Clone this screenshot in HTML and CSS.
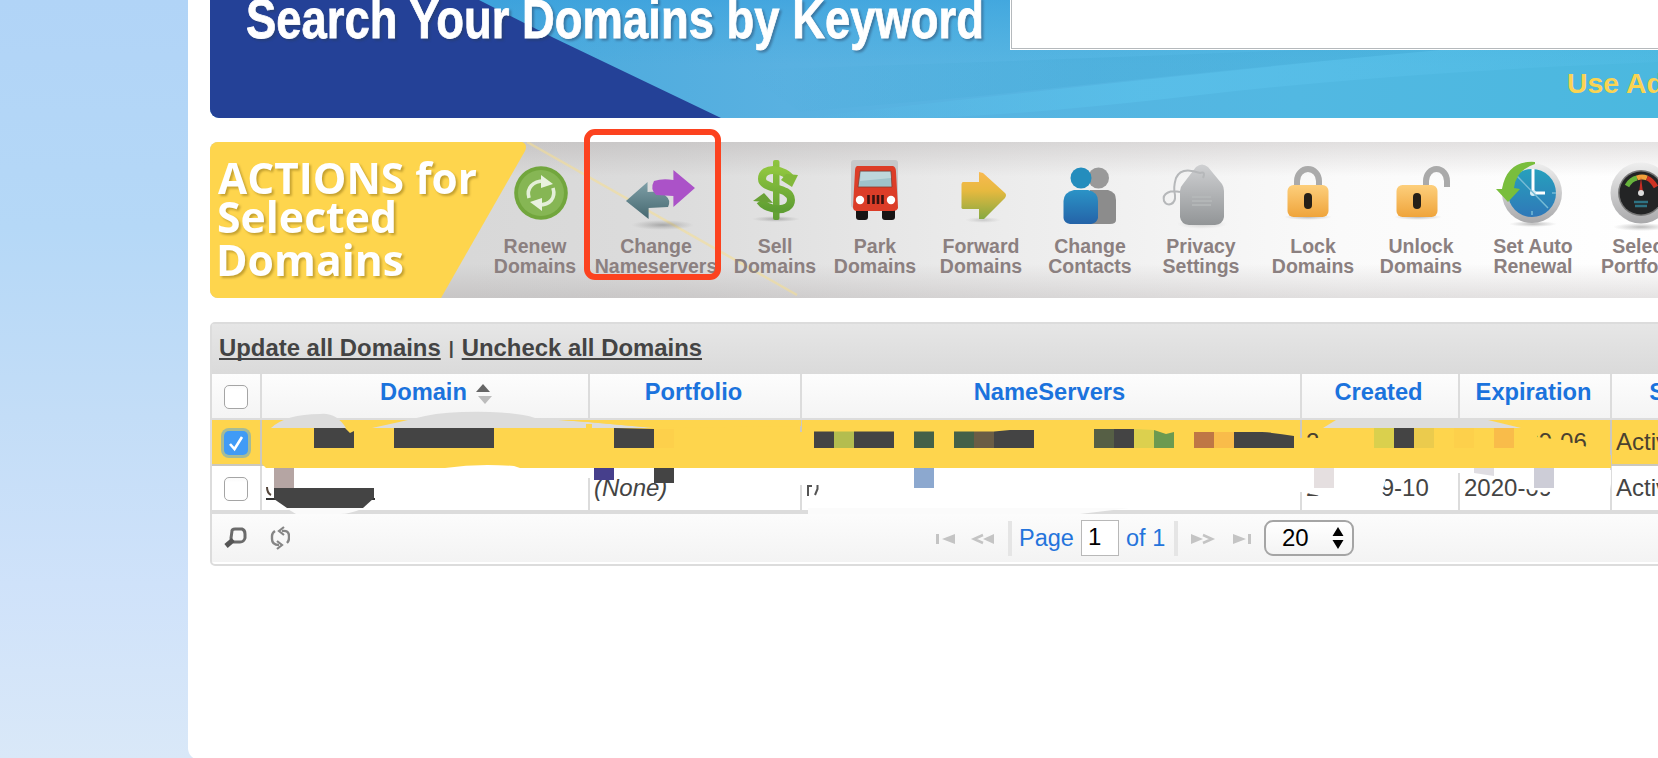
FILE: index.html
```html
<!DOCTYPE html>
<html lang="en">
<head>
<meta charset="utf-8">
<title>Domain Manager</title>
<link rel="stylesheet" href="styles.css">
</head>
<body>
<main class="panel">
  <section class="search">
    <svg class="search-art" viewBox="210 0 1448 118" preserveAspectRatio="none">
      <defs>
        <linearGradient id="sky" x1="0" x2="1"><stop offset=".2" stop-color="#4ba9dc"/><stop offset=".4" stop-color="#59b1e1"/><stop offset=".75" stop-color="#52b8e2"/><stop offset="1" stop-color="#4bb8df"/></linearGradient>
        <linearGradient id="skyTop" x1="0" y1="0" x2="0" y2="1"><stop offset="0" stop-color="#2f9bdc" stop-opacity=".5"/><stop offset=".55" stop-color="#3aa5dc" stop-opacity="0"/></linearGradient>
        <linearGradient id="beam" x1="0" x2="1"><stop offset="0" stop-color="#5cc3ec" stop-opacity="0"/><stop offset=".4" stop-color="#5cc3ec" stop-opacity=".6"/><stop offset="1" stop-color="#5cc3ec" stop-opacity=".2"/></linearGradient>
        <linearGradient id="dusk" x1="0" x2="1"><stop offset="0" stop-color="#45a9d6" stop-opacity="0"/><stop offset=".5" stop-color="#45a9d6" stop-opacity=".35"/><stop offset="1" stop-color="#45a9d6" stop-opacity=".25"/></linearGradient>
      </defs>
      <rect x="208" width="1450" height="118" fill="url(#sky)"/>
      <rect x="208" width="1450" height="118" fill="url(#skyTop)"/>
      <path d="M800 118Q1000 95 1180 76T1440 50H1658V62Q1400 72 1200 95T900 118Z" fill="url(#beam)"/>
      <path d="M740 70Q1000 62 1300 50H1440Q1200 72 980 96L800 112Z" fill="url(#dusk)"/>
      <path d="M208 0H479L554 38L721 118H208Z" fill="#244197"/>
      <text class="search-title" x="246" y="38" textLength="738" lengthAdjust="spacingAndGlyphs">Search Your Domains by Keyword</text>
    </svg>
    <div class="search-input"></div>
    <a class="advanced">Use Advanced</a>
  </section>

  <section class="actions">
    <svg class="actions-title" viewBox="210 142 620 156">
      <path d="M527 142L797 295" stroke="#f7df8f" stroke-width="2.500" opacity=".55"/>
      <path d="M210 142H522Q528 144 525 151L441 298H210Z" fill="#fed54d"/>
      <text x="218" y="194" textLength="259" lengthAdjust="spacingAndGlyphs">ACTIONS for</text>
      <text x="217" y="233" textLength="180" lengthAdjust="spacingAndGlyphs">Selected</text>
      <text x="216" y="275.500" textLength="188" lengthAdjust="spacingAndGlyphs">Domains</text>
    </svg>
    <nav class="action-list">
      <svg class="defs" width="0" height="0">
        <defs>
          <linearGradient id="green" x1="0" y1="0" x2="0" y2="1"><stop offset="0" stop-color="#8fc53e"/><stop offset="1" stop-color="#5f9e33"/></linearGradient>
          <linearGradient id="teal" x1="0" y1="0" x2="0" y2="1"><stop offset="0" stop-color="#7fa0a8"/><stop offset="1" stop-color="#45676f"/></linearGradient>
          <linearGradient id="fwd" x1="0" y1="0" x2="0" y2="1"><stop offset="0" stop-color="#f9b950"/><stop offset=".4" stop-color="#e6b93f"/><stop offset="1" stop-color="#86a942"/></linearGradient>
          <linearGradient id="blue" x1="0" y1="0" x2="0" y2="1"><stop offset="0" stop-color="#2b93c6"/><stop offset="1" stop-color="#2463a8"/></linearGradient>
          <linearGradient id="grey" x1="0" y1="0" x2="0" y2="1"><stop offset="0" stop-color="#cfd0d2"/><stop offset="1" stop-color="#929597"/></linearGradient>
          <linearGradient id="gold" x1="0" y1="0" x2="0" y2="1"><stop offset="0" stop-color="#fdcf7c"/><stop offset="1" stop-color="#efa43b"/></linearGradient>
          <linearGradient id="ring" x1="0" y1="0" x2="0" y2="1"><stop offset="0" stop-color="#eee"/><stop offset="1" stop-color="#a9a9ab"/></linearGradient>
          <linearGradient id="dial" x1="0" y1="0" x2="0" y2="1"><stop offset="0" stop-color="#27a0bd"/><stop offset="1" stop-color="#2f78b8"/></linearGradient>
          <radialGradient id="shade"><stop offset="0" stop-color="#555" stop-opacity=".4"/><stop offset="1" stop-color="#777" stop-opacity="0"/></radialGradient>
        </defs>
      </svg>
      <a class="action">
        <svg viewBox="469 150 84 86"><circle cx="517" cy="193" r="26.800" fill="#72a63d"/><circle cx="517" cy="193" r="23" fill="#86b654"/><path d="M505 198C502 188 509 181 520 181" fill="none" stroke="#e4efd8" stroke-width="3.600"/><path d="M517 175l12 9-12 4z" fill="#e9f2df"/><path d="M529 188C532 198 526 205 515 205" fill="none" stroke="#e4efd8" stroke-width="3.600"/><path d="M518 211l-12-9 12-4z" fill="#e9f2df"/></svg>
        <span>Renew<br>Domains</span>
      </a>
      <a class="action">
        <svg viewBox="581 150 84 86"><g transform="translate(-50.6 0) scale(1.078 1)"><ellipse cx="631" cy="225" rx="29" ry="5" fill="url(#shade)"/><path d="M597 201L617 182V192Q630 191 634 196Q639 200 636 207L618 208V219Z" fill="url(#teal)"/><path d="M661 188L641 170V180Q631 178 623 181Q619 189 625 195L641 196V207Z" fill="#ab52c8"/></g></svg>
        <span>Change<br>Nameservers</span>
      </a>
      <a class="action">
        <svg viewBox="733 150 84 86"><ellipse cx="776" cy="219" rx="24" ry="3" fill="url(#shade)"/><rect x="773" y="160" width="6.500" height="60" rx="2" fill="url(#green)"/><path d="M792 180C785 168 762 166 762 179C762 190 791 186 791 200C791 213 767 211 760 201" fill="none" stroke="url(#green)" stroke-width="8"/><path d="M798 175L786 174L781 180L792 187Z" fill="#82b83b"/><path d="M753 201L764 193L773 203Z" fill="#6aa137"/></svg>
        <span>Sell<br>Domains</span>
      </a>
      <a class="action">
        <svg viewBox="833 150 84 86"><rect x="851" y="160" width="47" height="48" rx="3" fill="#c6c8ca"/><rect x="856" y="206" width="12" height="14" rx="3" fill="#171414"/><rect x="882" y="206" width="13" height="14" rx="3" fill="#171414"/><path d="M857 166H893Q896 167 896 172L898 208Q897 211 893 211H857Q853 211 853 207L855 171Q855 167 857 166Z" fill="#dc3d28"/><path d="M860 171H891L892 187H858Z" fill="#9fc3cb" stroke="#8d3a2c" stroke-width=".8"/><path d="M861 172H890L891 178L860 181Z" fill="#bdd7dc"/><circle cx="860" cy="200" r="4.200" fill="#fff"/><circle cx="891" cy="200" r="4.200" fill="#fff"/><path d="M868.500 195V204M873.500 195V204M878 195V204M882.500 195V204" stroke="#391311" stroke-width="2.600"/></svg>
        <span>Park<br>Domains</span>
      </a>
      <a class="action">
        <svg viewBox="939 150 84 86"><ellipse cx="983" cy="220" rx="18" ry="3" fill="url(#shade)" opacity=".6"/><path d="M963 182H979V172L983 173L1005 193Q1007 195 1005 198L984 219L979 219V209H963Q961 209 961.500 206V184Q962 182 963 182Z" fill="url(#fwd)"/></svg>
        <span>Forward<br>Domains</span>
      </a>
      <a class="action">
        <svg viewBox="1048 150 84 86"><circle cx="1098.500" cy="178" r="10.500" fill="#999"/><path d="M1096 190H1108Q1116 192 1116 200V220Q1116 224 1110 224H1090V190Z" fill="#8c8c8c"/><circle cx="1081" cy="178" r="10.500" fill="#248dbd"/><path d="M1074 190H1088Q1098 192 1098 201V218Q1097 223 1091 224H1070Q1064 223 1063.500 218V201Q1064 192 1074 190Z" fill="url(#blue)"/></svg>
        <span>Change<br>Contacts</span>
      </a>
      <a class="action">
        <svg viewBox="1159 150 84 86"><ellipse cx="1202" cy="224" rx="25" ry="5" fill="url(#shade)" opacity=".6"/><path d="M1196 167Q1202 162 1208 167L1222 184Q1224 187 1224 191V217Q1223 224 1215 225H1189Q1181 224 1180 217V191Q1180 187 1183 184Z" fill="url(#grey)"/><path d="M1203 178Q1206 171 1200 173Q1181 166 1176 178Q1173 188 1175 195C1176 205 1167 207 1164 201C1162 193 1170 190 1180 192" fill="none" stroke="#b6b8ba" stroke-width="2"/><path d="M1192 197h19M1192 201h20M1192 205h19" stroke="#b7b9bb" stroke-width="1.500"/></svg>
        <span>Privacy<br>Settings</span>
      </a>
      <a class="action">
        <svg viewBox="1271 150 84 86"><ellipse cx="1308" cy="217" rx="24" ry="3" fill="url(#shade)"/><path d="M1297 188V181A11 12 0 0 1 1319 181V188" fill="none" stroke="#aaa" stroke-width="6"/><rect x="1287.500" y="185" width="41" height="32" rx="6" fill="url(#gold)"/><rect x="1304" y="193" width="8" height="16" rx="4" fill="#262018"/></svg>
        <span>Lock<br>Domains</span>
      </a>
      <a class="action">
        <svg viewBox="1379 150 84 86"><ellipse cx="1418" cy="217" rx="24" ry="3" fill="url(#shade)"/><path d="M1426 188V181A10.500 12 0 0 1 1447 181V187" fill="none" stroke="#aaa" stroke-width="6"/><rect x="1396.500" y="185" width="41" height="32" rx="6" fill="url(#gold)"/><rect x="1413" y="193" width="8" height="16" rx="4" fill="#262018"/></svg>
        <span>Unlock<br>Domains</span>
      </a>
      <a class="action">
        <svg viewBox="1491 150 84 86"><ellipse cx="1533" cy="224" rx="24" ry="3" fill="url(#shade)"/><circle cx="1532" cy="193" r="30" fill="url(#ring)"/><circle cx="1532" cy="193" r="24" fill="url(#dial)"/><path d="M1533 169V193H1545" fill="none" stroke="#fff" stroke-width="3"/><circle cx="1533" cy="193" r="3" fill="#d8edf5"/><path d="M1517 176L1548 208M1552 193h4M1532 211v4" stroke="#76bbd6" stroke-width="1.500"/><path d="M1535 162Q1507 160 1502 189H1496L1508 202L1520 189L1514 188Q1516 170 1535 164Z" fill="#79be3d"/></svg>
        <span>Set Auto<br>Renewal</span>
      </a>
      <a class="action">
        <svg viewBox="1599 150 84 86"><ellipse cx="1641" cy="227" rx="28" ry="4" fill="url(#shade)"/><circle cx="1641" cy="193" r="30.500" fill="url(#ring)"/><circle cx="1641" cy="193" r="23" fill="#777"/><circle cx="1641" cy="193" r="21.500" fill="#232425"/><path d="M1627 186Q1631 179 1637 178" fill="none" stroke="#66b33c" stroke-width="5"/><path d="M1637 178Q1642 176 1647 178" fill="none" stroke="#f2a13a" stroke-width="5"/><path d="M1647 178Q1652 180 1656 187" fill="none" stroke="#cf3323" stroke-width="5"/><path d="M1641 177L1643 193H1639Z" fill="#c72d24"/><circle cx="1641" cy="193" r="3" fill="#ddd"/><path d="M1634 202h14M1635 206h12" stroke="#2e7384" stroke-width="2.500"/></svg>
        <span>Select<br>Portfolio</span>
      </a>
    </nav>
    <div class="callout"></div>
  </section>

  <section class="grid">
    <div class="grid-title"><a>Update all Domains</a><i>|</i><a>Uncheck all Domains</a></div>
    <div class="row head">
      <div class="cell check"><b class="box"></b></div>
      <div class="cell">Domain<svg class="sort" viewBox="0 0 16 20"><path d="M7 0L14 8H0Z" fill="#666"/><path d="M9 20L16 12H2Z" fill="#bcbcbc"/></svg></div>
      <div class="cell">Portfolio</div>
      <div class="cell">NameServers</div>
      <div class="cell">Created</div>
      <div class="cell">Expiration</div>
      <div class="cell">Status</div>
    </div>
    <div class="row selected">
      <div class="cell check"><b class="box on"><svg viewBox="0 0 24 24"><path d="M6 13L10.500 18L18 6" fill="none" stroke="#fff" stroke-width="2.600"/></svg></b></div>
      <div class="cell"></div><div class="cell"></div><div class="cell"></div>
      <div class="cell">2</div><div class="cell">2020-09-06</div><div class="cell">Active</div>
    </div>
    <div class="row">
      <div class="cell check"><b class="box"></b></div>
      <div class="cell"></div><div class="cell none">(None)</div><div class="cell">n</div>
      <div class="cell">2018-09-10</div><div class="cell">2020-09</div><div class="cell">Active</div>
    </div>
    <div class="pager">
      <svg class="tools" viewBox="0 0 70 30"><path d="M12 5Q12 3 15 3H22Q25 4 25 8V12Q24 16 20 16H14Q11 15 11 12Z" fill="none" stroke="#6b6b6b" stroke-width="3"/><path d="M13 14L6 20" stroke="#555" stroke-width="5"/><path d="M62 5Q69 4 69 10V12Q69 15 67 17M59 19Q52 19 52 13V10Q52 7 55 5" fill="none" stroke="#858585" stroke-width="2.400"/><path d="M64 1L59 5L64 9M57 15L62 19L57 23" fill="none" stroke="#858585" stroke-width="2.200"/></svg>
      <svg class="back" viewBox="0 0 60 12"><path d="M0 1h3v10H0zM19 1v10L6 6z" fill="#c4c4c4"/><path d="M58 1v10L47 6z" fill="#c4c4c4"/><path d="M47 2L38 6L47 10" fill="none" stroke="#c4c4c4" stroke-width="2.500"/></svg>
      <span class="sep"></span>
      <span class="page-word">Page</span><span class="page-input">1</span><span class="page-total">of 1</span>
      <span class="sep"></span>
      <svg class="forward" viewBox="0 0 62 12"><path d="M0 1v10L12 6z" fill="#c4c4c4"/><path d="M12 2L21 6L12 10" fill="none" stroke="#c4c4c4" stroke-width="2.500"/><path d="M42 1v10L55 6zM57 1h3v10h-3z" fill="#c4c4c4"/></svg>
      <span class="select">20<svg viewBox="0 0 12 22"><path d="M6 0L11.500 9H.5ZM6 22L11.500 13H.5Z"/></svg></span>
    </div>
    <svg class="redact" viewBox="210 400 1448 120">
      <path d="M262 455H1611V468H266L262 464Z" fill="#fed54d"/>
      <path d="M445 468Q478 463 514 466L520 468Z" fill="#fff"/>
      <path d="M271 428Q286 414 320 414Q336 412 346 428Z" fill="#dcdcdc"/>
      <path d="M372 428Q400 422 425 416Q450 411 490 412Q520 413 535 418L588 422L655 428Z" fill="#dcdcdc"/>
      <path d="M1323 428L1336 420H1488L1521 428Z" fill="#dcdcdc"/>
      <path d="M558 420H801V426L655 428L588 422Z" fill="#fed54d"/>
      <path d="M797 432H803V466H797ZM1298 438H1336V466H1298ZM1303 440H1330V460H1303ZM586 424H592V466H586ZM1456 429H1537V466H1456Z" fill="#fed54d"/>
      <path d="M1537 437L1563 440L1572 443H1578L1588 448V462H1537Z" fill="#fed54d"/>
      <path d="M314 428H345L350 433L354 431V448H314ZM394 428H494V448H394ZM614 428L654 429V448H614ZM814 431.500H834V448H814ZM854 431.500H894V448H854ZM994 431.500L1010 430H1034V448H994ZM1114 429H1134V448H1114ZM1234 432H1262Q1278 433 1294 436V448H1234ZM1394 428H1414V448H1394Z" fill="#444"/>
      <path d="M834 431.500h20V448h-20z" fill="#b4bd4f"/>
      <path d="M914 431.500h20V448h-20zM954 431.500h20V448h-20z" fill="#446148"/>
      <path d="M974 431.500h20V448h-20z" fill="#6b5d45"/>
      <path d="M1094 429h20V448h-20z" fill="#565f45"/>
      <path d="M1134 429L1154 430V448H1134z" fill="#dcd04e"/>
      <path d="M1154 430L1166 434L1174 432V448H1154z" fill="#6c9a50"/>
      <path d="M1194 432h20V448h-20z" fill="#bf7745"/>
      <path d="M1214 432h20V448h-20zM1494 428h20V448h-20z" fill="#f9bc4a"/>
      <path d="M1454 428h20V448h-20zM654 429h20V448h-20z" fill="#fdd04b"/>
      <path d="M1374 428h20V448h-20z" fill="#dad04d"/>
      <path d="M1414 428h20V448h-20z" fill="#ebcb4d"/>
      <path d="M587 468H592V478H587ZM798 468H804V485H798ZM1298 468H1304V492H1298ZM1456 468H1462V473H1456Z" fill="#fff"/>
      <path d="M806 470H830V500H806Z" fill="#fff"/>
      <path d="M808 485V496M808 486H812M817.500 485V489L815 495" fill="none" stroke="#555" stroke-width="2"/>
      <path d="M808 508H1130L1080 514H808Z" fill="#fbfbfb"/>
      <path d="M1304 470H1381L1386 478L1382 493L1388 498H1330L1304 492.500Z" fill="#fff"/>
      <path d="M1510 470H1611V484L1608 500H1552L1550 492L1526 489L1517 482Z" fill="#fff"/>
      <path d="M274 468h20v20h-20z" fill="#b5a5a3"/>
      <path d="M267 487Q267 493 271 495" fill="none" stroke="#54463c" stroke-width="2"/>
      <path d="M266 499H375" stroke="#333" stroke-width="2"/>
      <path d="M274 488H374V498L363 508H287L274 499Z" fill="#444"/>
      <path d="M286 508H364Q350 514 340 514H296Z" fill="#fafafa"/>
      <path d="M594 468h20v12h-20z" fill="#463f8c"/>
      <path d="M654 468h20v15h-20z" fill="#444"/>
      <path d="M914 468h20v20h-20z" fill="#8ca8cf"/>
      <path d="M1314 468h20v20h-20z" fill="#e5dfe0"/>
      <path d="M1474 468H1494V476L1474 473z" fill="#dfdde2"/>
      <path d="M1534 468h20v20h-20z" fill="#cdcdd7"/>
    </svg>
  </section>
</main>
</body>
</html>
```
FILE: styles.css
```css
* { box-sizing: border-box; }
body {
  margin: 0;
  width: 1658px;
  height: 758px;
  overflow: hidden;
  padding-left: 188px;
  background: linear-gradient(#b1d4f7, #b5d8f7 30%, #c3ddf7 55%, #cfe2fa 77%, #d9e8f8);
  font-family: "Liberation Sans", Arial, sans-serif;
}
svg { display: block; flex: none; }
.panel {
  height: 760px;
  padding-left: 22px;
  background: #fff;
  border-bottom-left-radius: 12px;
  overflow: hidden;
}
.search {
  position: relative;
  height: 118px;
  border-bottom-left-radius: 9px;
  overflow: hidden;
}
.search-art { width: 1448px; height: 118px; }
.search-title {
  font: bold 55px "Liberation Sans", Arial, sans-serif;
  fill: #fff;
  stroke: #fff;
  stroke-width: .8px;
  filter: drop-shadow(2px 2px 1px rgba(40, 60, 90, .45));
}
.search-input {
  position: absolute;
  left: 800px;
  top: -10px;
  right: -10px;
  height: 60px;
  background: #fff;
  border: 1px solid #fff;
  box-shadow: inset 1px -1px #b5b9bc;
}
.advanced {
  position: absolute;
  left: 1357px;
  top: 67px;
  font-size: 28.4px;
  line-height: 32px;
  font-weight: bold;
  color: #fad452;
  white-space: nowrap;
}
.actions {
  position: relative;
  height: 156px;
  margin-top: 24px;
  border-radius: 8px 0 0 8px;
  background:
    linear-gradient(rgba(150, 142, 142, .25), transparent 22%, transparent 78%, rgba(150, 142, 142, .25)),
    linear-gradient(90deg, #d8d8d8 18%, #dcdcdc 32%, #e9e9e9 50%, #fafafa 78%, #fff);
}
.actions-title {
  position: absolute;
  left: 0;
  top: 0;
  width: 620px;
  height: 156px;
  border-radius: 8px 0 0 8px;
}
.actions-title text {
  font: bold 43px "Open Sans", sans-serif;
  fill: #fff;
  filter: drop-shadow(2px 2px 1px rgba(140, 110, 20, .5));
}
.defs { position: absolute; }
.action-list {
  position: relative;
  display: flex;
  padding: 8px 0 0 283px;
  height: 156px;
  overflow: hidden;
}
.action {
  flex: none;
  width: 84px;
  display: flex;
  flex-direction: column;
  align-items: center;
  font-size: 19.5px;
  line-height: 20px;
  font-weight: bold;
  text-align: center;
  white-space: nowrap;
  color: #8b8080;
}
.action svg { width: 84px; height: 86px; }
.action:nth-of-type(2) { margin-left: 37px; }
.action:nth-of-type(3) { margin-left: 35px; }
.action:nth-of-type(4) { margin-left: 16px; }
.action:nth-of-type(5) { margin-left: 22px; }
.action:nth-of-type(6) { margin-left: 25px; }
.action:nth-of-type(7) { margin-left: 27px; }
.action:nth-of-type(8) { margin-left: 28px; }
.action:nth-of-type(9) { margin-left: 24px; }
.action:nth-of-type(10) { margin-left: 28px; }
.action:nth-of-type(11) { margin-left: 24px; }
.callout {
  position: absolute;
  left: 374px;
  top: -13px;
  width: 137px;
  height: 151px;
  border: 6px solid #fc421f;
  border-radius: 11px;
}
.grid {
  position: relative;
  width: 1600px;
  height: 244px;
  margin-top: 24px;
  border: 2px solid #dcdcdc;
  border-radius: 5px;
  color: #444;
  font-size: 24px;
}
.grid-title {
  height: 50px;
  padding: 0 0 2px 7px;
  display: flex;
  align-items: center;
  background: linear-gradient(#e6e6e6, #dadada);
  font-weight: bold;
  font-size: 23.9px;
  line-height: 48px;
}
.grid-title a {
  text-decoration: underline;
  text-decoration-thickness: 2px;
  text-underline-offset: 2px;
  text-decoration-skip-ink: none;
}
.grid-title i { width: 21px; text-align: center; font-size: 18px; font-style: normal; }
.row {
  display: grid;
  grid-template-columns: 50px 328px 212px 500px 158px 152px 152px;
  height: 46px;
}
.cell {
  position: relative;
  padding-left: 4px;
  border-right: 2px solid #dcdcdc;
  border-bottom: 2px solid #dcdcdc;
  line-height: 44px;
  white-space: nowrap;
}
.head .cell {
  padding: 0 3px 0 0;
  text-align: center;
  line-height: 36px;
  font-weight: bold;
  font-size: 23.7px;
  color: #1b73dd;
  background: linear-gradient(#fdfdfd, #f4f4f4);
}
.cell.check, .head .cell.check {
  display: flex;
  align-items: center;
  justify-content: center;
  padding: 2px 0 0;
}
.selected { background: #fed54d; color: #4a4130; }
.selected .cell { border-color: #ccc8bd; }
.none { font-style: italic; }
.box {
  width: 24px;
  height: 24px;
  border: 1px solid #a5a5a5;
  border-radius: 5px;
  background: linear-gradient(#fafafa, #fff 20%);
}
.box.on {
  border: 0;
  background: #409bf6;
  box-shadow: 0 0 0 3px #a5bb98;
}
.sort { position: absolute; left: 214px; top: 10px; width: 16px; height: 20px; }
.pager {
  position: relative;
  height: 52px;
  border-top: 4px solid #dcdcdc;
  margin-top: -2px;
  padding-left: 8px;
  display: flex;
  align-items: center;
  background: linear-gradient(#fcfcfc, #f3f3f3);
  color: #2474dc;
  line-height: 36px;
}
.tools { width: 70px; height: 30px; margin-top: 6px; }
.back { width: 60px; height: 12px; margin: 2px 12px 0 646px; }
.sep { width: 4px; height: 35px; background: #e5e5e5; }
.page-word { width: 69px; padding-left: 7px; font-size: 23.5px; }
.page-input {
  width: 38px;
  height: 36px;
  padding-left: 6px;
  border: 1px solid #b8b8b8;
  background: #fff;
  color: #000;
  line-height: 32px;
}
.page-total { width: 55px; padding-left: 7px; font-size: 23.5px; }
.forward { width: 62px; height: 12px; margin: 2px 11px 0 13px; }
.select {
  width: 90px;
  height: 36px;
  padding: 0 8px 0 16px;
  display: flex;
  align-items: center;
  justify-content: space-between;
  border: 2px solid #a5a5a5;
  border-radius: 9px;
  background: linear-gradient(#fff, #f4f4f4);
  color: #000;
}
.select svg { width: 12px; height: 22px; }
.redact {
  position: absolute;
  left: -2px;
  top: 76px;
  width: 1448px;
  height: 120px;
}
```
